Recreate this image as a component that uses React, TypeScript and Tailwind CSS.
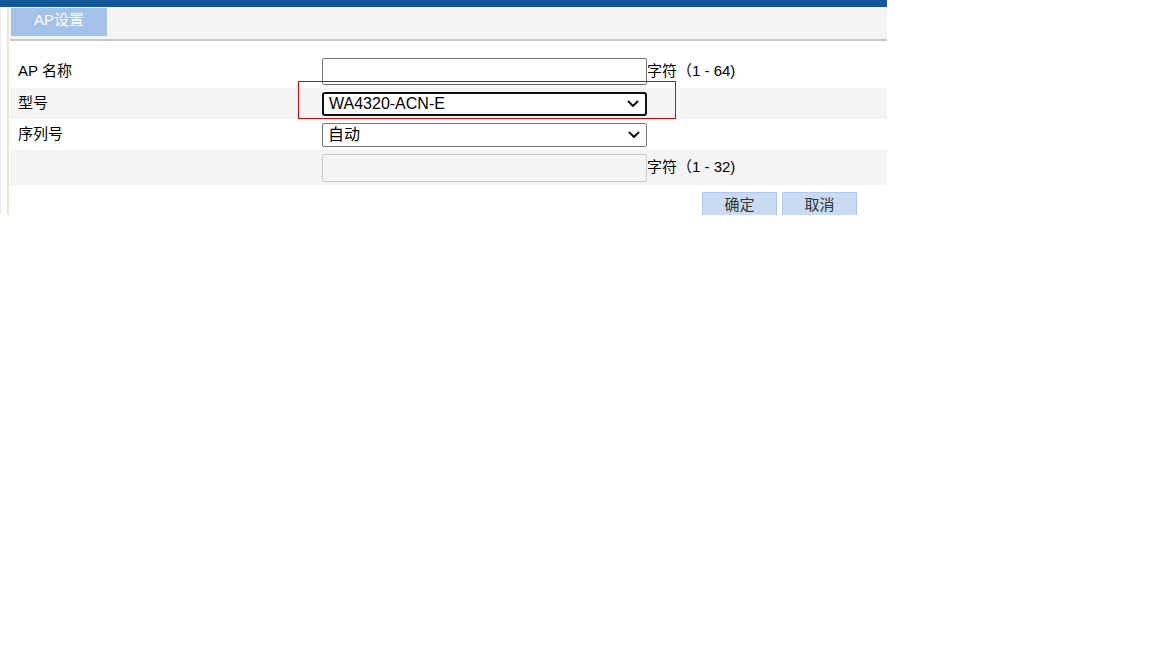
import React from "react";

const font = { fontFamily: '"Liberation Sans", "Noto Sans CJK SC", sans-serif' };

function Chevron() {
  return (
    <svg width="12" height="8" viewBox="0 0 12 8" className="shrink-0">
      <path d="M1.5 1.5 L6 6 L10.5 1.5" fill="none" stroke="#111" strokeWidth="2" strokeLinecap="round" strokeLinejoin="round" />
    </svg>
  );
}

function FakeSelect({ value, focused }: { value: string; focused?: boolean }) {
  return (
    <div
      className={`flex items-center justify-between w-[325px] h-[24px] bg-white pl-[5px] pr-[6px] text-[16px] text-black ${
        focused ? "border-2 border-[#101010] rounded-[3px] pl-[4px]" : "border border-[#767676] rounded-[2px]"
      }`}
    >
      <span className="leading-none">{value}</span>
      <Chevron />
    </div>
  );
}

export default function App() {
  return (
    <div className="w-[1152px] h-[648px] bg-white text-[15px] text-black" style={font}>
      <div className="w-[887px] h-[215px] overflow-hidden flex flex-col">
        <div className="h-[7px] bg-[#12579a] shrink-0" />
        <div className="flex flex-1">
          <div className="w-[7px] border-l border-[#ececec]" />
          <div className="w-[2px] bg-[#ebe6d6]" />
          <div className="flex-1 pl-[1px] flex flex-col">
            {/* tab bar */}
            <div className="h-[34px] bg-[#f4f4f4] border-b-2 border-[#c8c8c8] flex items-start pl-[1px] pt-[1px]">
              <div className="w-[96px] h-[28px] bg-[#a3c1e9] text-white text-[15px] flex items-center justify-center pb-[3px]">
                AP设置
              </div>
            </div>

            <div className="mt-[13px] flex flex-col">
              <div className="h-[34px] flex items-center">
                <div className="w-[312px] pl-[8px]">AP 名称</div>
                <div className="w-[325px] h-[27px] border border-[#767676] rounded-[2px] bg-white" />
                <div>字符（1 - 64)</div>
              </div>
              <div className="h-[31px] flex items-center bg-[#f4f4f4] relative">
                <div className="w-[312px] pl-[8px]">型号</div>
                <FakeSelect value="WA4320-ACN-E" focused />
                <div className="absolute z-10 left-[288px] top-[-7px] w-[378px] h-[38px] border border-[#e00000]" />
              </div>
              <div className="h-[31px] flex items-center">
                <div className="w-[312px] pl-[8px]">序列号</div>
                <FakeSelect value="自动" />
              </div>
              <div className="h-[35px] flex items-center bg-[#f4f4f4]">
                <div className="w-[312px] pl-[8px]" />
                <div className="w-[325px] h-[28px] border border-[#c8c8c8] rounded-[2px] bg-[#f4f4f4]" />
                <div>字符（1 - 32)</div>
              </div>
              <div className="flex justify-end gap-[5px] pr-[30px] pt-[7px]">
                <button className="w-[75px] h-[26px] bg-[#c9daf3] border border-[#adc7ee] text-[#333] text-[15px] flex items-center justify-center">
                  确定
                </button>
                <button className="w-[75px] h-[26px] bg-[#c9daf3] border border-[#adc7ee] text-[#333] text-[15px] flex items-center justify-center">
                  取消
                </button>
              </div>
            </div>
          </div>
        </div>
      </div>
    </div>
  );
}
